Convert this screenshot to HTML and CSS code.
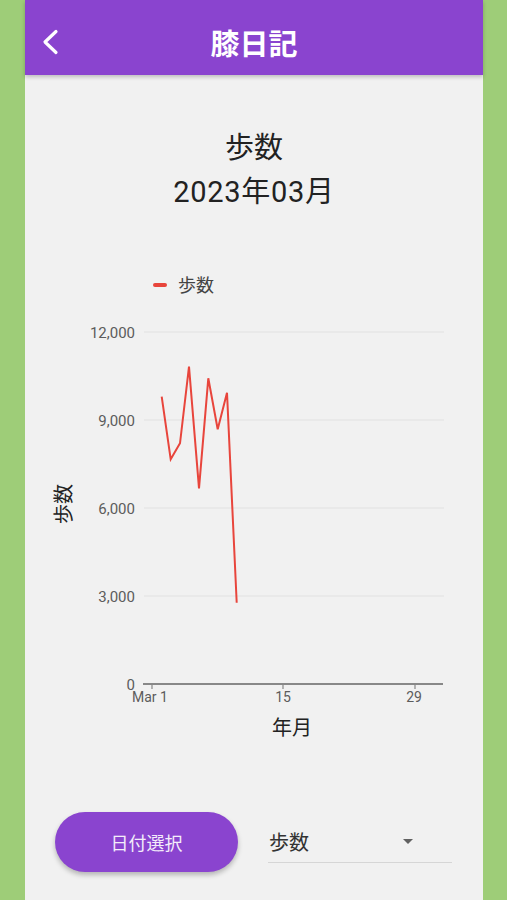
FILE: index.html
```html
<!DOCTYPE html>
<html lang="ja">
<head>
<meta charset="utf-8">
<title>膝日記</title>
<link rel="stylesheet" href="styles.css">
</head>
<body>
<div class="phone">
  <header class="appbar">
    <div class="appbar-left">
      <svg class="back" width="24" height="30" viewBox="0 0 24 30" aria-hidden="true">
        <path d="M18 4.5 L7 15 L18 25.5" fill="none" stroke="#fff" stroke-width="3.2" stroke-linecap="round" stroke-linejoin="round"/>
      </svg>
    </div>
    <h1 class="appbar-title">膝日記</h1>
    <div class="appbar-right"></div>
  </header>

  <main class="content">
    <div class="heading">
      <div class="heading-line">歩数</div>
      <div class="heading-line heading-date">2023年03月</div>
    </div>

    <svg class="chart" viewBox="25 230 458 540" width="458" height="540">
      <!-- legend -->
      <line x1="155" y1="285" x2="165" y2="285" stroke="#e8453c" stroke-width="4" stroke-linecap="round"/>
      <text class="legend-text" x="178" y="291.5">歩数</text>

      <!-- grid -->
      <g stroke="#e2e2e2" stroke-width="1.2">
        <line x1="144" y1="332" x2="444" y2="332"/>
        <line x1="144" y1="420" x2="444" y2="420"/>
        <line x1="144" y1="508" x2="444" y2="508"/>
        <line x1="144" y1="596" x2="444" y2="596"/>
      </g>

      <!-- y labels -->
      <g class="ylab" text-anchor="end">
        <text x="135" y="337.5">12,000</text>
        <text x="135" y="425.5">9,000</text>
        <text x="135" y="513.5">6,000</text>
        <text x="135" y="601.5">3,000</text>
        <text x="135" y="689.5">0</text>
      </g>

      <!-- x axis -->
      <line x1="143" y1="684" x2="443" y2="684" stroke="#888" stroke-width="2"/>
      <g stroke="#888" stroke-width="1.2">
        <line x1="152" y1="684" x2="152" y2="689"/>
        <line x1="283" y1="684" x2="283" y2="689"/>
        <line x1="415" y1="684" x2="415" y2="689"/>
      </g>
      <g class="xlab" text-anchor="middle">
        <text x="150" y="702">Mar 1</text>
        <text x="283" y="702">15</text>
        <text x="414" y="702">29</text>
      </g>

      <!-- axis titles -->
      <text class="axis-title" x="292" y="735" text-anchor="middle">年月</text>
      <text class="axis-title" x="0" y="0" text-anchor="middle" transform="translate(71 504) rotate(-90)">歩数</text>

      <!-- data -->
      <polyline fill="none" stroke="#e8453c" stroke-width="2" stroke-linejoin="miter"
        points="161.7,396.7 170.7,459.3 180,443.3 189,366.7 199,488.3 208.3,378.3 217.7,429.3 227,392.7 236.7,602.7"/>
    </svg>

    <div class="controls">
      <button class="pill-btn" type="button">日付選択</button>
      <div class="dropdown">
        <span class="dropdown-value">歩数</span>
        <svg class="dropdown-arrow" width="10" height="5" viewBox="0 0 10 5" aria-hidden="true">
          <path d="M0 0 L10 0 L5 5 Z" fill="#616161"/>
        </svg>
      </div>
    </div>
  </main>
</div>
</body>
</html>
```

FILE: styles.css
```css
html, body {
  margin: 0;
  padding: 0;
}

body {
  background: #9ecd78;
  font-family: "Roboto", "Noto Sans CJK JP", sans-serif;
  color: #222;
  width: 507px;
  height: 900px;
  overflow: hidden;
}

.phone {
  margin-left: 25px;
  width: 458px;
  height: 900px;
  background: #f1f1f1;
  display: flex;
  flex-direction: column;
}

.appbar {
  height: 67px;
  padding-top: 8px;
  background: #8a44cf;
  display: grid;
  grid-template-columns: 1fr auto 1fr;
  align-items: center;
  box-shadow: 0 2px 4px rgba(0, 0, 0, 0.22);
  position: relative;
  z-index: 1;
}

.appbar-left {
  display: flex;
  align-items: center;
  padding-left: 13px;
}

.back {
  display: block;
}

.appbar-title {
  margin: 0;
  color: #fff;
  font-family: "Noto Sans CJK JP", sans-serif;
  font-size: 29px;
  font-weight: 700;
  line-height: 40px;
}

.content {
  display: flex;
  flex-direction: column;
}

.heading {
  padding-top: 51px;
  text-align: center;
}

.heading-line {
  font-size: 29px;
  line-height: 44px;
  color: #222;
}

.heading-date {
  letter-spacing: 0.7px;
}

.chart {
  display: block;
  margin-top: 16px;
}

.legend-text {
  font-family: "Noto Sans CJK JP", sans-serif;
  font-size: 18px;
  fill: #444;
}

.ylab text {
  font-family: "Roboto", sans-serif;
  font-size: 15px;
  fill: #5c5c5c;
}

.xlab text {
  font-family: "Roboto", sans-serif;
  font-size: 14px;
  fill: #5c5c5c;
}

.axis-title {
  font-family: "Noto Sans CJK JP", sans-serif;
  font-size: 20px;
  fill: #222;
}

.controls {
  margin-top: 42px;
  padding-left: 30px;
  display: flex;
  align-items: center;
  gap: 30px;
}

.pill-btn {
  width: 183px;
  height: 60px;
  border: none;
  border-radius: 30px;
  background: #8a44cf;
  color: #f3ecfa;
  font-family: "Noto Sans CJK JP", sans-serif;
  font-size: 18px;
  box-shadow: 0 3px 5px rgba(0, 0, 0, 0.25);
  padding: 0;
}

.dropdown {
  width: 184px;
  height: 41px;
  display: flex;
  align-items: center;
  border-bottom: 1px solid #d6d6d6;
  padding-right: 39px;
  box-sizing: border-box;
}

.dropdown-value {
  font-family: "Noto Sans CJK JP", sans-serif;
  font-size: 20px;
  color: #333;
  padding-left: 1px;
}

.dropdown-arrow {
  margin-left: auto;
  display: block;
}
```
